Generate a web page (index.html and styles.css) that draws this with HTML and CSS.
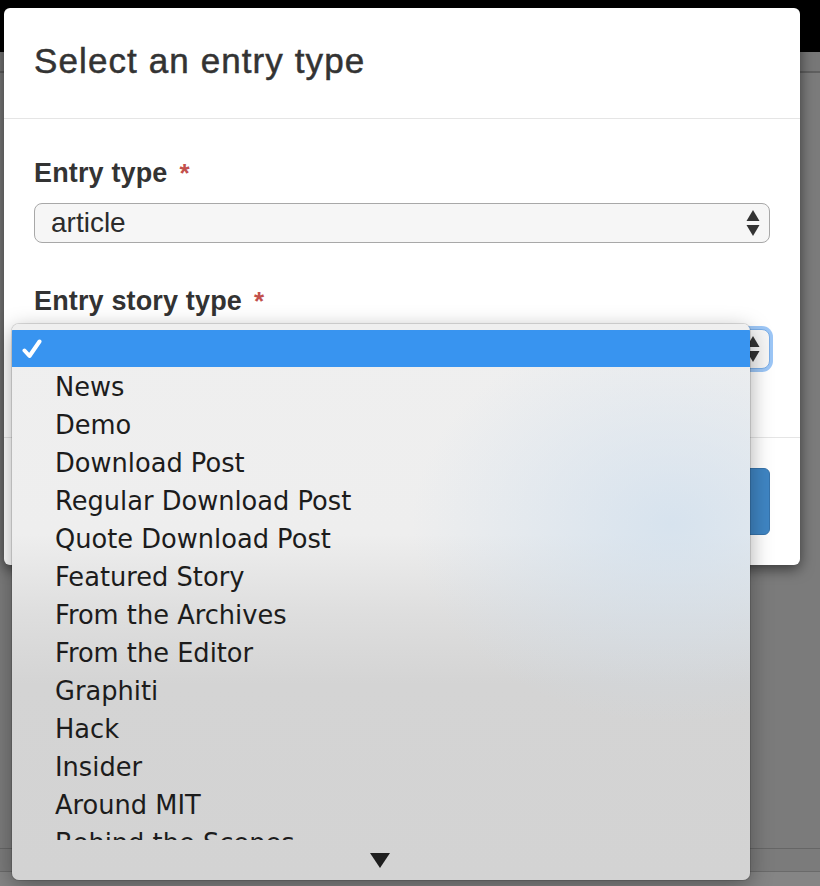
FILE: index.html
```html
<!DOCTYPE html>
<html>
<head>
<meta charset="utf-8">
<link rel="stylesheet" href="styles.css">
</head>
<body>
<div class="page">
  <div class="topbar"></div>
  <div class="band"></div>
  <div class="fill"></div>
  <div class="lower"></div>
  <div class="bottom"></div>
</div>

<div class="modal">
  <div class="modal-header">
    <h4 class="modal-title">Select an entry type</h4>
  </div>
  <div class="modal-body">
    <div class="form-group">
      <label class="label">Entry type<span class="req">*</span></label>
      <div class="select">
        <span class="select-value">article</span>
        <svg class="updown" width="14" height="26" viewBox="0 0 14 26"><path d="M7 0 L13.5 11 L0.5 11 Z" fill="#333"/><path d="M0.5 15 L13.5 15 L7 26 Z" fill="#333"/></svg>
      </div>
    </div>
    <div class="form-group second">
      <label class="label">Entry story type<span class="req">*</span></label>
      <div class="select focus">
        <span class="select-value"></span>
        <svg class="updown" width="14" height="26" viewBox="0 0 14 26"><path d="M7 0 L13.5 11 L0.5 11 Z" fill="#333"/><path d="M0.5 15 L13.5 15 L7 26 Z" fill="#333"/></svg>
      </div>
    </div>
  </div>
  <div class="modal-footer">
    <button class="btn">Continue</button>
  </div>
</div>

<div class="menu">
  <div class="menu-list">
    <div class="item selected"><svg class="check" width="20" height="20" viewBox="0 0 20 20"><path d="M2.5 11.5 L7.5 17 L17.5 2.5" fill="none" stroke="#fff" stroke-width="4" stroke-linecap="round" stroke-linejoin="round"/></svg></div>
    <div class="item">News</div>
    <div class="item">Demo</div>
    <div class="item">Download Post</div>
    <div class="item">Regular Download Post</div>
    <div class="item">Quote Download Post</div>
    <div class="item">Featured Story</div>
    <div class="item">From the Archives</div>
    <div class="item">From the Editor</div>
    <div class="item">Graphiti</div>
    <div class="item">Hack</div>
    <div class="item">Insider</div>
    <div class="item">Around MIT</div>
    <div class="item">Behind the Scenes</div>
  </div>
  <div class="menu-more"><span class="down-arrow"></span></div>
</div>
</body>
</html>
```

FILE: styles.css
```css
html, body {
  margin: 0;
  padding: 0;
}
body {
  width: 820px;
  height: 886px;
  overflow: hidden;
  background: #7a7a7a;
  font-family: "Liberation Sans", Arial, sans-serif;
}
.page {
  display: flex;
  flex-direction: column;
  height: 886px;
}
.topbar {
  height: 52px;
  background: #000;
}
.band {
  height: 19px;
  background: #777;
  border-bottom: 2px solid #5f5f5f;
}
.fill {
  flex: 1;
  background: #7b7b7b;
}
.lower {
  height: 22px;
  background: #7b7b7b;
  border-top: 1px solid #666;
}
.bottom {
  height: 14px;
  background: #858585;
  border-top: 1px solid #6a6a6a;
}

/* modal */
.modal {
  position: absolute;
  left: 4px;
  top: 8px;
  width: 796px;
  height: 557px;
  background: #fff;
  border-radius: 6px;
  box-shadow: 0 4px 14px rgba(0, 0, 0, 0.55);
  display: flex;
  flex-direction: column;
}
.modal-header {
  padding: 33px 30px 37px;
  border-bottom: 1px solid #e5e5e5;
}
.modal-title {
  margin: 0;
  font-size: 35px;
  line-height: 40px;
  font-weight: normal;
  letter-spacing: 1.1px;
  color: #333;
  -webkit-text-stroke: 0.5px #333;
}
.modal-body {
  padding: 38px 30px 0;
  flex: 1;
}
.form-group {
  display: flex;
  flex-direction: column;
}
.form-group.second {
  margin-top: 42px;
}
.label {
  font-size: 27px;
  line-height: 32px;
  font-weight: bold;
  color: #333;
  letter-spacing: 0.15px;
}
.req {
  color: #c2504c;
  margin-left: 12px;
  font-size: 26px;
}
.select {
  margin-top: 14px;
  height: 38px;
  border: 1px solid #a8a8a8;
  border-radius: 8px;
  background: #f6f6f6;
  display: flex;
  align-items: center;
  justify-content: space-between;
  padding: 0 9px 0 16px;
}
.form-group.second .select {
  margin-top: 12px;
}
.select.focus {
  border-color: #7aaee8;
  box-shadow: 0 0 0 3px rgba(90, 160, 240, 0.6);
}
.select-value {
  font-size: 28px;
  color: #2b2b2b;
  line-height: 38px;
}
.updown {
  display: block;
}
.modal-footer {
  border-top: 1px solid #e5e5e5;
  padding: 30px 30px 30px;
  display: flex;
  justify-content: flex-end;
}
.btn {
  height: 67px;
  width: 150px;
  border: 1px solid #3673aa;
  border-radius: 6px;
  background: #3f85c3;
  color: #fff;
  font-family: "Liberation Sans", Arial, sans-serif;
  font-size: 26px;
}

/* dropdown menu */
.menu {
  position: absolute;
  left: 12px;
  top: 324px;
  width: 738px;
  height: 556px;
  border-radius: 7px;
  overflow: hidden;
  box-shadow: 0 6px 22px rgba(0, 0, 0, 0.35), 0 0 0 1px rgba(0, 0, 0, 0.12);
  background:
    radial-gradient(ellipse 260px 200px at 660px 200px, rgba(205, 222, 238, 0.7), rgba(205, 222, 238, 0) 100%),
    linear-gradient(to bottom, #efefef 0px, #eeeeee 210px, #dedede 290px, #d4d4d4 360px, #d3d3d3 556px);
  display: flex;
  flex-direction: column;
}
.menu-list {
  height: 516px;
  padding-top: 6px;
  box-sizing: border-box;
  overflow: hidden;
}
.item {
  height: 38px;
  line-height: 38px;
  padding-left: 43px;
  font-family: "DejaVu Sans", Verdana, sans-serif;
  font-size: 25.7px;
  color: #1c1c1c;
  white-space: nowrap;
}
.item.selected {
  background: #3894f0;
  height: 37px;
  display: flex;
  align-items: center;
  padding-left: 10px;
  margin-bottom: 1px;
}
.check {
  display: block;
}
.menu-more {
  flex: 1;
  display: flex;
  justify-content: center;
  align-items: center;
}
.down-arrow {
  width: 0;
  height: 0;
  border-left: 10px solid transparent;
  border-right: 10px solid transparent;
  border-top: 15px solid #1e1e1e;
  margin-left: -2px;
}
```
